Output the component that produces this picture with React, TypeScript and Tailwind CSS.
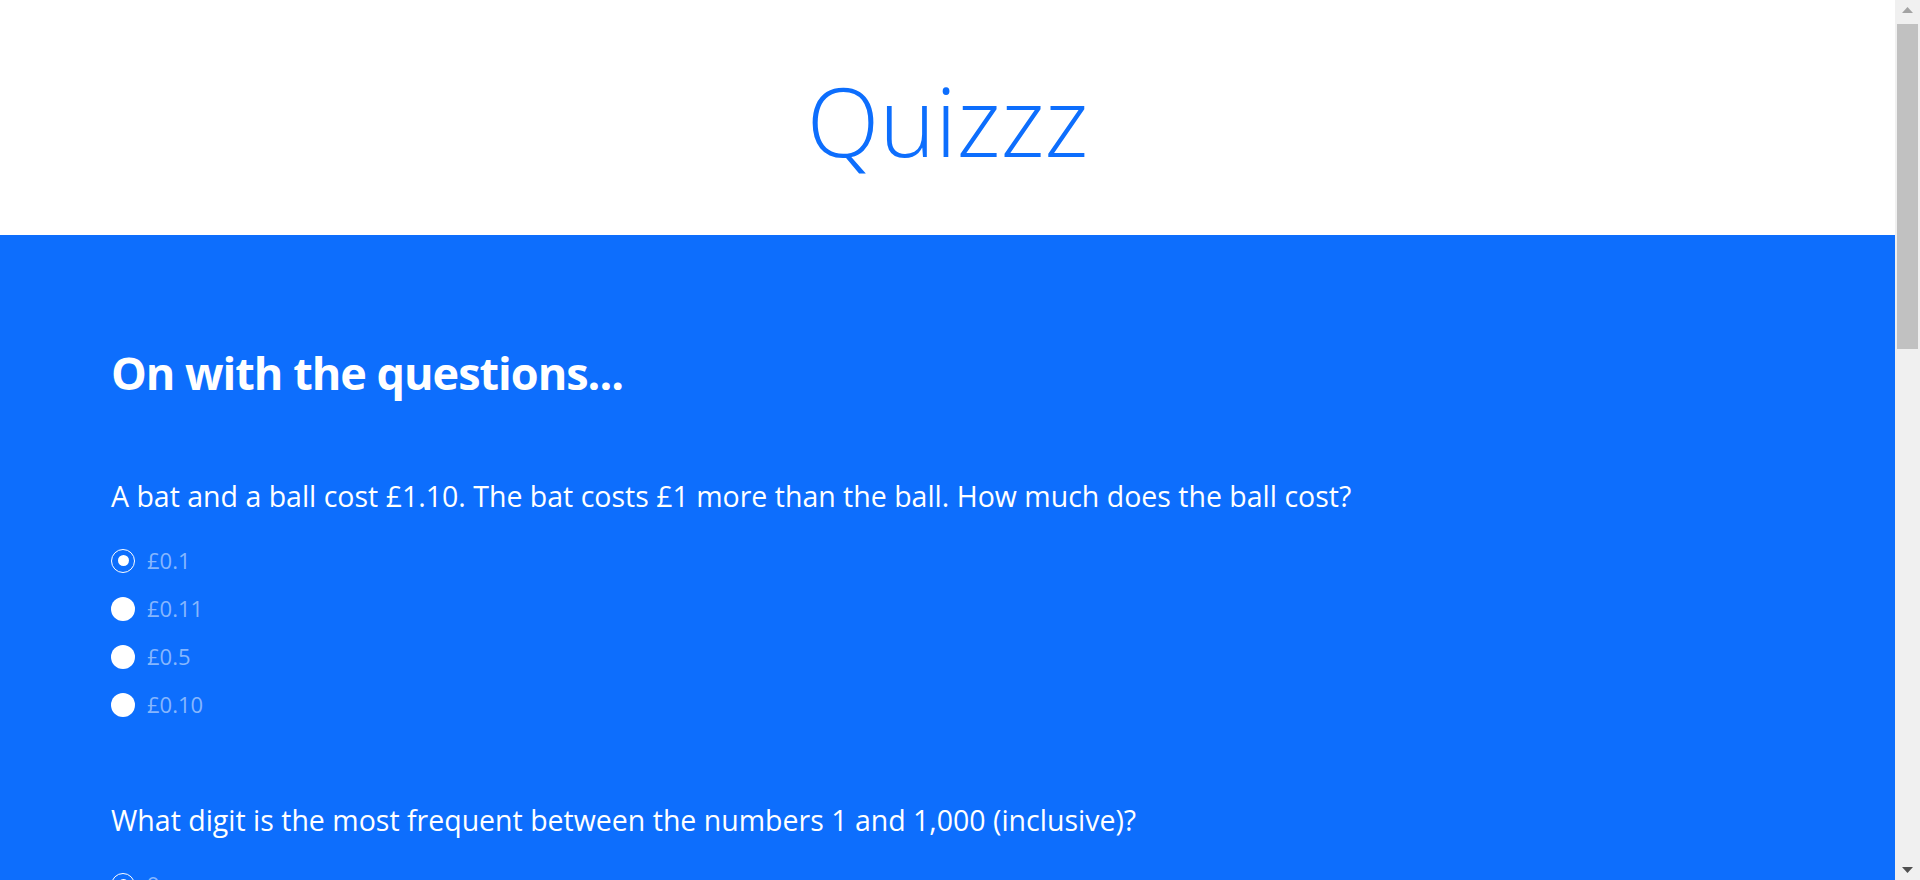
import React, { useState } from "react";

type Question = {
  text: string;
  options: string[];
};

const questions: Question[] = [
  {
    text: "A bat and a ball cost £1.10. The bat costs £1 more than the ball. How much does the ball cost?",
    options: ["£0.1", "£0.11", "£0.5", "£0.10"],
  },
  {
    text: "What digit is the most frequent between the numbers 1 and 1,000 (inclusive)?",
    options: ["9", "0", "1", "2"],
  },
  {
    text: "If it takes 5 machines 5 minutes to make 5 widgets, how long would it take 100 machines to make 100 widgets?",
    options: ["5 minutes", "100 minutes", "20 minutes", "1 minute"],
  },
  {
    text: "A patch of lily pads doubles in size every day. It takes 48 days to cover the lake. How long to cover half of it?",
    options: ["47 days", "24 days", "12 days", "36 days"],
  },
  {
    text: "How many months have 28 days?",
    options: ["12", "1", "2", "0"],
  },
];

const Radio = ({ checked }: { checked: boolean }) =>
  checked ? (
    <span className="flex h-6 w-6 shrink-0 items-center justify-center rounded-full border border-white">
      <span className="h-[11px] w-[11px] rounded-full bg-white" />
    </span>
  ) : (
    <span className="h-6 w-6 shrink-0 rounded-full bg-white" />
  );

// window-style scrollbar, drawn since the browser hides its own
const ScrollBar = ({ offset }: { offset: number }) => (
  <aside className="flex h-screen w-[25px] shrink-0 flex-col bg-[#f0f0f0]">
    <div className="flex h-[20px] items-center justify-center">
      <svg width="11" height="6" viewBox="0 0 11 6">
        <path d="M0 6h11L5.5 0z" fill="#a3a3a3" />
      </svg>
    </div>
    <div className="flex-1 px-[2px] pt-[4px]">
      <div
        className="h-[325px] bg-[#c1c1c1]"
        style={{ transform: `translateY(${offset}px)` }}
      />
    </div>
    <div className="flex h-[20px] items-center justify-center">
      <svg width="11" height="6" viewBox="0 0 11 6">
        <path d="M0 0h11L5.5 6z" fill="#505050" />
      </svg>
    </div>
  </aside>
);

const App: React.FC = () => {
  const [answers, setAnswers] = useState<number[]>(questions.map(() => 0));
  const [offset, setOffset] = useState(0);

  const pick = (q: number, o: number) => {
    setAnswers((prev) => prev.map((a, i) => (i === q ? o : a)));
  };

  const onScroll = (e: React.UIEvent<HTMLDivElement>) => {
    const el = e.currentTarget;
    const max = el.scrollHeight - el.clientHeight;
    const room = el.clientHeight - 40 - 4 - 325;
    setOffset(max > 0 ? (el.scrollTop / max) * room : 0);
  };

  return (
    <div className="flex h-screen font-['Open_Sans',sans-serif]">
      <main className="h-screen flex-1 overflow-y-auto" onScroll={onScroll}>
        <header className="flex h-[235px] items-center justify-center bg-white pt-[6px]">
          <h1 className="text-[95px] font-light leading-none text-[#0d6efd]">Quizzz</h1>
        </header>

        <section className="bg-[#0d6efd] px-[111px] pb-[111px] pt-[111px]">
          <h2 className="text-[45px] font-bold leading-[1.2] tracking-[-1px] text-white">
            On with the questions...
          </h2>

          <div className="mt-[75px] flex flex-col gap-[70px]">
            {questions.map((q, qi) => (
              <div key={qi}>
                <p className="text-[28.5px] leading-[1.5] text-white">{q.text}</p>
                <div className="mt-[19px] flex flex-col">
                  {q.options.map((opt, oi) => (
                    <button
                      key={oi}
                      type="button"
                      className="flex h-12 items-center gap-3 text-left"
                      onClick={() => pick(qi, oi)}
                    >
                      <Radio checked={answers[qi] === oi} />
                      <span className="text-[22px] text-[#86b6fe]">{opt}</span>
                    </button>
                  ))}
                </div>
              </div>
            ))}
          </div>

          <button
            type="button"
            className="mt-[70px] rounded-md border border-white px-6 py-2 text-[22px] text-white"
          >
            Submit
          </button>
        </section>
      </main>
      <ScrollBar offset={offset} />
    </div>
  );
};

export default App;
